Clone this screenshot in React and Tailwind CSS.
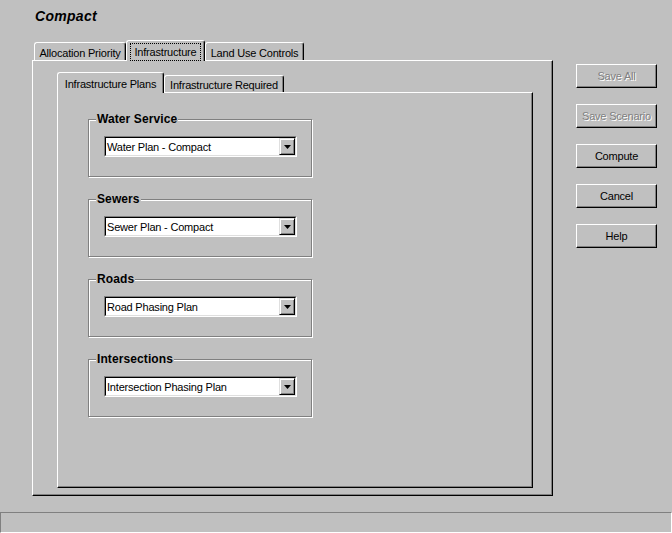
import React from 'react';

const groups = [
  { label: 'Water Service', value: 'Water Plan - Compact' },
  { label: 'Sewers', value: 'Sewer Plan - Compact' },
  { label: 'Roads', value: 'Road Phasing Plan' },
  { label: 'Intersections', value: 'Intersection Phasing Plan' },
];

const buttons = [
  { label: 'Save All', disabled: true },
  { label: 'Save Scenario', disabled: true },
  { label: 'Compute' },
  { label: 'Cancel' },
  { label: 'Help' },
];

const Tab = ({ label, selected, focus, className }) => {
  if (selected) {
    return (
      <div
        className={`relative z-10 -mb-px h-[21px] bg-[#c0c0c0] border-l border-t border-r border-l-white border-t-white border-r-black rounded-t-[3px] shadow-[inset_-1px_0_#808080] flex items-start justify-center pt-[2px] ${className}`}
      >
        <span className={focus ? 'border border-dotted border-black px-[3px] pt-[1px] leading-[15px]' : 'leading-[15px] pt-[2px]'}>
          {label}
        </span>
      </div>
    );
  }
  return (
    <div
      className={`h-[18px] border-l border-t border-r border-l-white border-t-white border-r-black rounded-t-[3px] shadow-[inset_-1px_0_#808080] flex items-center justify-center pt-[3px] leading-[15px] ${className}`}
    >
      {label}
    </div>
  );
};

const Combo = ({ value }) => (
  <div className="w-[193px] h-[21px] border border-t-[#808080] border-l-[#808080] border-r-white border-b-white">
    <div className="h-full border border-t-black border-l-black border-r-[#dfdfdf] border-b-[#dfdfdf] bg-white flex items-center">
      <span className="pl-[1px] pt-[2px] leading-[15px] flex-1">{value}</span>
      <div className="w-[16px] h-[17px] bg-[#c0c0c0] border border-t-[#dfdfdf] border-l-[#dfdfdf] border-r-black border-b-black shadow-[inset_1px_1px_#fff,inset_-1px_-1px_#808080] flex items-center justify-center">
        <svg width="7" height="4" viewBox="0 0 7 4">
          <polygon points="0,0 7,0 3.5,4" fill="#000" />
        </svg>
      </div>
    </div>
  </div>
);

const GroupBox = ({ label, value, first }) => (
  <div
    className={`relative w-[224px] h-[58px] border border-[#808080] shadow-[1px_1px_0_#fff,inset_1px_1px_0_#fff] pl-[15px] pt-[16px] ${first ? '' : 'mt-[22px]'}`}
  >
    <span className="absolute left-[7px] -top-[8px] px-[1px] bg-[#c0c0c0] text-[12px] font-bold leading-[14px] tracking-[0.1px]">
      {label}
    </span>
    <Combo value={value} />
  </div>
);

const App = () => {
  return (
    <div className="w-[672px] h-[533px] bg-[#c0c0c0] flex flex-col overflow-hidden text-black text-[11px] tracking-[-0.2px] font-['Liberation_Sans',Arial,sans-serif]">
      {/* Title */}
      <div className="h-[40px] pl-[35px] pt-[8px]">
        <span className="text-[14px] font-bold italic leading-[16px] tracking-[0.3px]">Compact</span>
      </div>

      <div className="flex">
        {/* Outer tab control */}
        <div className="ml-[32px] w-[521px] flex flex-col">
          <div className="h-[20px] flex items-end pl-[2px]">
            <Tab label="Allocation Priority" className="w-[92px]" />
            <Tab label="Infrastructure" selected focus className="w-[79px]" />
            <Tab label="Land Use Controls" className="w-[99px]" />
          </div>
          <div className="w-[521px] h-[436px] border border-t-white border-l-white border-r-black border-b-black shadow-[inset_-1px_-1px_#808080] pl-[24px] pt-[11px]">
            {/* Inner tab control */}
            <div className="h-[20px] flex items-end">
              <Tab label="Infrastructure Plans" selected className="w-[107px]" />
              <Tab label="Infrastructure Required" className="w-[120px] !h-[17px]" />
            </div>
            <div className="w-[476px] h-[396px] border border-t-white border-l-white border-r-black border-b-black shadow-[inset_-1px_-1px_#808080] pl-[30px] pt-[26px]">
              {groups.map((g, i) => (
                <GroupBox key={g.label} label={g.label} value={g.value} first={i === 0} />
              ))}
            </div>
          </div>
        </div>

        {/* Buttons */}
        <div className="ml-[23px] mt-[24px] flex flex-col gap-[16px]">
          {buttons.map((b) => (
            <button
              key={b.label}
              className={`w-[81px] h-[24px] bg-[#c0c0c0] border border-t-white border-l-white border-r-black border-b-black shadow-[inset_-1px_-1px_#808080] leading-[15px] ${
                b.disabled ? 'text-[#808080] [text-shadow:1px_1px_0_#fff]' : 'text-black'
              }`}
            >
              {b.label}
            </button>
          ))}
        </div>
      </div>

      {/* Status bar */}
      <div className="mt-auto h-[21px] border-t border-l border-t-[#808080] border-l-[#808080] border-r border-b border-r-white border-b-white" />
    </div>
  );
};

export default App;
